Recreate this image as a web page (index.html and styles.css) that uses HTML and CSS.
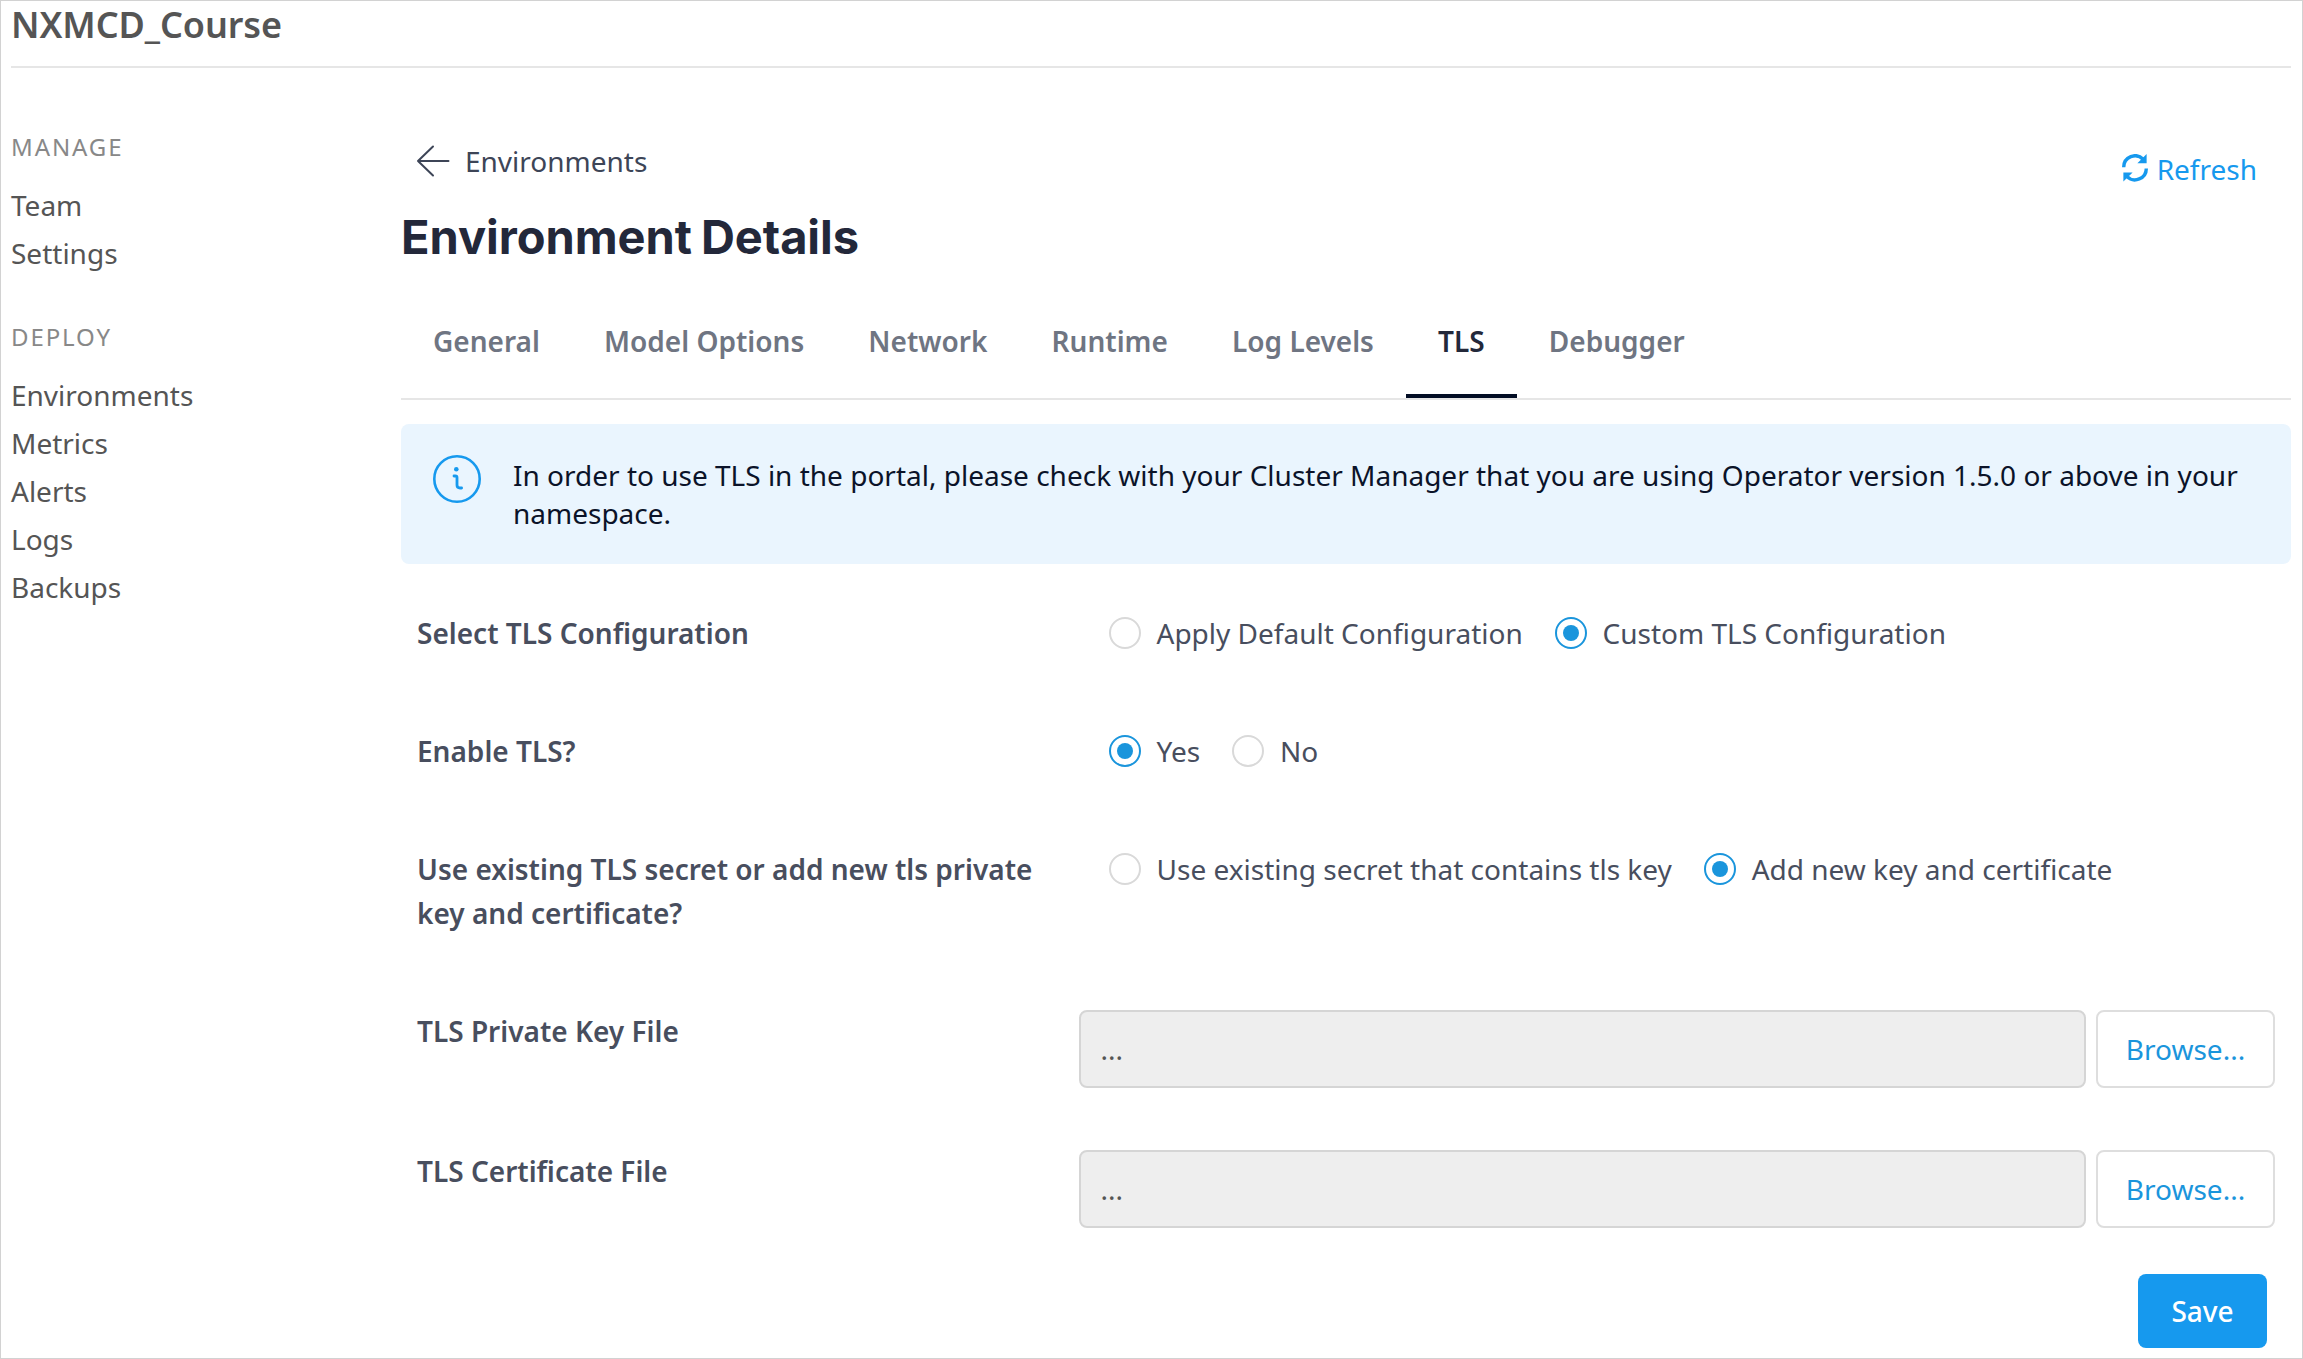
FILE: index.html
```html
<!DOCTYPE html>
<html lang="en">
<head>
<meta charset="utf-8">
<title>NXMCD_Course - Environment Details</title>
<link rel="stylesheet" href="styles.css">
</head>
<body>
<div class="page">
  <header class="header"><h1 class="project">NXMCD_Course</h1></header>
  <div class="layout">
    <nav class="sidebar">
      <section class="group">
        <h2 class="group-title">MANAGE</h2>
        <a class="nav-link">Team</a>
        <a class="nav-link">Settings</a>
      </section>
      <section class="group">
        <h2 class="group-title">DEPLOY</h2>
        <a class="nav-link">Environments</a>
        <a class="nav-link">Metrics</a>
        <a class="nav-link">Alerts</a>
        <a class="nav-link">Logs</a>
        <a class="nav-link">Backups</a>
      </section>
    </nav>
    <main class="main">
      <div class="topbar">
        <a class="back">
          <svg class="back-icon" width="34" height="32" viewBox="0 0 34 32"><path d="M32.5 16H2M17 1.5L2 16L17 30.5" fill="none" stroke="currentColor" stroke-width="2" stroke-linecap="round" stroke-linejoin="round"/></svg>
          <span>Environments</span>
        </a>
        <a class="refresh">
          <svg class="refresh-icon" width="26" height="28" viewBox="0 0 26 28"><g id="half"><path d="M1.7 13.2A11.4 11.4 0 0 1 21.2 5.2" fill="none" stroke="currentColor" stroke-width="3.4"/><path d="M24.6 0V9.2H15.4Z" fill="currentColor"/></g><use href="#half" transform="rotate(180 13 13.8)"/></svg>
          <span>Refresh</span>
        </a>
      </div>
      <h2 class="title">Environment Details</h2>
      <div class="tabs">
        <a class="tab">General</a>
        <a class="tab">Model Options</a>
        <a class="tab">Network</a>
        <a class="tab">Runtime</a>
        <a class="tab">Log Levels</a>
        <a class="tab active">TLS</a>
        <a class="tab">Debugger</a>
      </div>
      <div class="notice">
        <svg class="notice-icon" width="48" height="48" viewBox="0 0 48 48"><circle cx="24" cy="24" r="22.7" fill="none" stroke="currentColor" stroke-width="2.6"/><circle cx="23.3" cy="14.3" r="2.3" fill="currentColor"/><path d="M21 21H22.4Q24 21 24 22.6V30Q24 33 27 33H28.6" fill="none" stroke="currentColor" stroke-width="2.8" stroke-linecap="round"/></svg>
        <p class="notice-text">In order to use TLS in the portal, please check with your Cluster Manager that you are using Operator version 1.5.0 or above in your namespace.</p>
      </div>
      <form class="form">
        <div class="row">
          <div class="label">Select TLS Configuration</div>
          <div class="options">
            <label class="option"><span class="radio"></span>Apply Default Configuration</label>
            <label class="option"><span class="radio checked"></span>Custom TLS Configuration</label>
          </div>
        </div>
        <div class="row">
          <div class="label">Enable TLS?</div>
          <div class="options">
            <label class="option"><span class="radio checked"></span>Yes</label>
            <label class="option"><span class="radio"></span>No</label>
          </div>
        </div>
        <div class="row">
          <div class="label">Use existing TLS secret or add new tls private key and certificate?</div>
          <div class="options">
            <label class="option"><span class="radio"></span>Use existing secret that contains tls key</label>
            <label class="option"><span class="radio checked"></span>Add new key and certificate</label>
          </div>
        </div>
        <div class="row file">
          <div class="label">TLS Private Key File</div>
          <div class="picker"><div class="path">...</div><div class="browse">Browse...</div></div>
        </div>
        <div class="row file">
          <div class="label">TLS Certificate File</div>
          <div class="picker"><div class="path">...</div><div class="browse">Browse...</div></div>
        </div>
        <div class="actions"><div class="save">Save</div></div>
      </form>
    </main>
  </div>
</div>
</body>
</html>
```
FILE: styles.css
```css
* { box-sizing: border-box; }
body {
  margin: 0;
  background: #fff;
  color: #555;
  font: 400 28px/44px "Noto Sans", sans-serif;
}
h1, h2, p { margin: 0; }
.page {
  width: 2303px;
  height: 1359px;
  border: 1px solid #d2d2d2;
  padding: 0 11px 0 10px;
  overflow: hidden;
}
.header { height: 67px; border-bottom: 2px solid #e6e6e6; }
.project { font-size: 36px; line-height: 48px; font-weight: 600; letter-spacing: -0.1px; }
.layout { display: flex; }
.sidebar { width: 390px; padding-top: 61px; }
.group { display: flex; flex-direction: column; margin-bottom: 42px; }
.group-title {
  font-size: 24px;
  line-height: 36px;
  font-weight: 400;
  letter-spacing: 1.9px;
  color: #888;
  margin-bottom: 16px;
}
.nav-link { line-height: 48px; }
.main { flex: 1; padding-top: 71px; }
.topbar { display: flex; justify-content: space-between; height: 68px; padding: 0 34px 0 15px; }
.back { display: flex; height: 44px; color: #3d4557; gap: 15px; }
.back-icon { margin-top: 6px; }
.refresh { display: flex; padding-top: 8px; gap: 9px; color: #1699ee; }
.refresh-icon { margin-top: 7px; }
.title {
  font: 650 47px/59px Inter, sans-serif;
  letter-spacing: -0.05px;
  word-spacing: -2px;
  color: #23283a;
  height: 60px;
}
.tabs { display: flex; gap: 0.15px; margin-top: 52px; height: 81px; border-bottom: 2px solid #e6e6e6; }
.tab { padding: 0 32px; height: 79px; font-weight: 600; color: #6f7582; }
.tab.active { color: #23283a; border-bottom: 4px solid #020d24; }
.notice {
  display: flex;
  gap: 32px;
  height: 140px;
  margin-top: 24px;
  padding: 31px 32px;
  background: #eaf5fe;
  border-radius: 8px;
}
.notice-icon { flex: none; color: #1699ee; }
.notice-text { line-height: 38px; margin-top: 1px; color: #0b1329; }
.form { padding: 47px 16px 0; color: #484e5e; }
.row { display: flex; margin-bottom: 74px; }
.label { width: 662px; padding-right: 32px; font-weight: 600; }
.options { display: flex; gap: 32.3px; padding-left: 30px; }
.option { display: flex; }
.radio {
  display: flex;
  width: 32px;
  height: 32px;
  margin: 6px 15.5px 0 0;
  border: 2px solid #d9d9d9;
  border-radius: 50%;
}
.radio.checked { border-color: #1a95dc; }
.radio.checked::after { content: ""; width: 16px; height: 16px; margin: 6px; border-radius: 50%; background: #1a95dc; }
.row.file { margin-bottom: 62px; height: 78px; }
.picker { display: flex; flex: 1; gap: 10px; margin-top: 1px; height: 78px; }
.path { flex: 1; border: 2px solid #d5d5d5; border-radius: 8px; background: #eee; padding-left: 19.5px; line-height: 74px; color: #555; }
.browse { width: 179px; border: 2px solid #dedede; border-radius: 8px; text-align: center; line-height: 74px; color: #1a95dc; }
.actions { display: flex; justify-content: flex-end; padding-right: 8px; margin-top: -15px; }
.save { width: 129px; height: 74px; border-radius: 8px; background: #1699ee; color: #fff; font-weight: 500; line-height: 74px; text-align: center; }
```
